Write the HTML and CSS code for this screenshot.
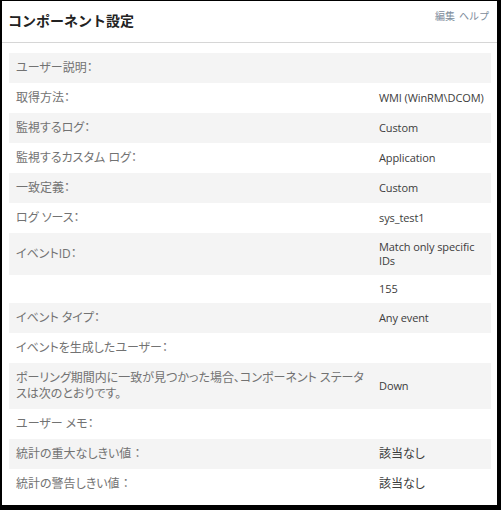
FILE: index.html
```html
<!DOCTYPE html>
<html lang="ja">
<head>
    <meta charset="UTF-8">
    <meta name="viewport" content="width=device-width, initial-scale=1.0">
    <title>コンポーネント設定</title>
    <link rel="stylesheet" href="styles.css">
</head>
<body>
    <div class="panel">
        <div class="panel-header">
            <h1>コンポーネント設定</h1>
            <div class="header-links">
                <a href="#">編集</a>
                <a href="#">ヘルプ</a>
            </div>
        </div>

        <!-- Component settings -->
        <table class="settings">
            <colgroup>
                <col class="col-label">
                <col class="col-value">
            </colgroup>
            <tr><td class="label">ユーザー説明：</td><td class="value"></td></tr>
            <tr><td class="label">取得方法：</td><td class="value">WMI (WinRM\DCOM)</td></tr>
            <tr><td class="label">監視するログ：</td><td class="value">Custom</td></tr>
            <tr><td class="label">監視するカスタム ログ：</td><td class="value">Application</td></tr>
            <tr><td class="label">一致定義：</td><td class="value">Custom</td></tr>
            <tr><td class="label">ログ ソース：</td><td class="value">sys_test1</td></tr>
            <tr><td class="label">イベントID：</td><td class="value">Match only specific IDs</td></tr>
            <tr><td class="label"></td><td class="value">155</td></tr>
            <tr><td class="label">イベント タイプ：</td><td class="value">Any event</td></tr>
            <tr><td class="label">イベントを生成したユーザー：</td><td class="value"></td></tr>
            <tr><td class="label">ポーリング期間内に一致が見つかった場合、コンポーネント ステータスは次のとおりです。</td><td class="value">Down</td></tr>
            <tr><td class="label">ユーザー メモ：</td><td class="value"></td></tr>
            <tr><td class="label">統計の重大なしきい値 ：</td><td class="value jp">該当なし</td></tr>
            <tr><td class="label">統計の警告しきい値 ：</td><td class="value jp">該当なし</td></tr>
        </table>
    </div>
</body>
</html>
```

FILE: styles.css
```css
:root {
    --frame: #000000;
    --row-alt: #f4f4f4;
    --label-text: #727272;
    --value-text: #3c3c3c;
    --link-text: #7d8c9b;
    --rule: #d6d6d6;
}

html, body {
    margin: 0;
    height: 100%;
}

body {
    background: var(--frame);
    padding: 1px 4px 5px 2px;
    box-sizing: border-box;
    font-family: 'Open Sans', 'Noto Sans CJK JP', sans-serif;
    font-size: 12px;
}

.panel {
    background: #ffffff;
    height: 100%;
    overflow: hidden;
}

.panel-header {
    display: flex;
    justify-content: space-between;
    align-items: flex-start;
    height: 41px;
    border-bottom: 1px solid var(--rule);
}

.panel-header h1 {
    margin: 0;
    padding: 10px 0 0 6px;
    font-size: 14px;
    line-height: 20px;
    font-weight: 700;
    color: #222;
}

.header-links {
    display: flex;
    gap: 4px;
    padding: 8px 8px 0 0;
    font-size: 10px;
    line-height: 14px;
}

.header-links a {
    color: var(--link-text);
    text-decoration: none;
}

.settings {
    margin: 10px 0 0 7px;
    width: 482px;
    border-collapse: collapse;
    table-layout: fixed;
}

.col-label { width: 363px; }
.col-value { width: 119px; }

.settings tr:nth-child(odd) {
    background: var(--row-alt);
}

.settings td {
    padding: 7px;
    vertical-align: middle;
}

.label {
    color: var(--label-text);
    line-height: 16px;
    font-feature-settings: "palt";
}

.value {
    color: var(--value-text);
    font-size: 11px;
    line-height: 14px;
    padding-top: 7px;
    padding-bottom: 7px;
    padding-right: 0;
    letter-spacing: -0.1px;
}

.value.jp {
    font-size: 12px;
    line-height: 16px;
    letter-spacing: 0;
    font-feature-settings: "palt";
}
```
